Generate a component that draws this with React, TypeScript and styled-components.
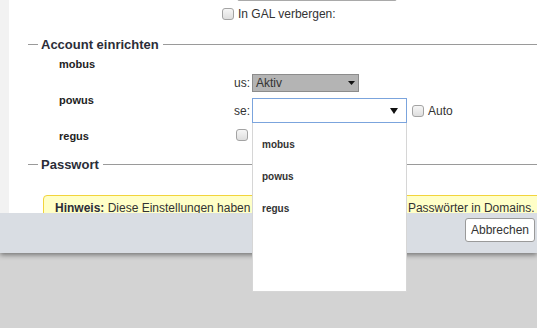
import React from 'react';
import styled, { createGlobalStyle } from 'styled-components';

const Global = createGlobalStyle`
  html, body { margin: 0; padding: 0; }
  body {
    font-family: "Liberation Sans", Arial, sans-serif;
    color: #333;
    background: #d3d3d3;
  }
`;

const Page = styled.div`
  position: relative;
  width: 537px;
  height: 328px;
  overflow: hidden;
  background: #d3d3d3;
`;

const Dialog = styled.div`
  display: flex;
  flex-direction: column;
  box-shadow: 0 2px 5px rgba(0, 0, 0, 0.45);
`;

const Body = styled.div`
  display: flex;
  height: 213px;
`;

const Strip = styled.div`
  width: 9px;
  flex-shrink: 0;
  background: #f2f2f2;
`;

const Main = styled.div`
  flex: 1;
  min-width: 0;
  background: #fff;
  overflow: hidden;
  display: flex;
  flex-direction: column;
`;

const TopInput = styled.div`
  flex-shrink: 0;
  box-sizing: border-box;
  width: 160px;
  height: 22px;
  margin: -21px 0 0 228px;
  border: 1px solid #a9a9a9;
  border-radius: 2px;
`;

const CheckRow = styled.label<{ $indent?: number; $top?: number }>`
  display: flex;
  align-items: center;
  gap: 4px;
  height: 13px;
  margin: ${(p) => p.$top ?? 0}px 0 0 ${(p) => p.$indent ?? 0}px;
  font-size: 12px;
  color: #333;
  white-space: nowrap;
`;

const Check = styled.input.attrs({ type: 'checkbox' })`
  appearance: none;
  -webkit-appearance: none;
  margin: 0;
  box-sizing: border-box;
  width: 12px;
  height: 12px;
  flex-shrink: 0;
  border: 1px solid #a3a3a3;
  border-radius: 3px;
  background: linear-gradient(#f6f6f6, #dedede);
`;

const Legend = styled.div<{ $top: number }>`
  display: flex;
  align-items: center;
  height: 15px;
  margin: ${(p) => p.$top}px 0 0 19px;
  font-size: 13px;
  font-weight: 700;
  color: #2b2d38;
  white-space: nowrap;
  &::before {
    content: '';
    width: 10px;
    height: 1px;
    margin-right: 3px;
    background: #9a9a9a;
  }
  &::after {
    content: '';
    flex: 1;
    height: 1px;
    margin-left: 4px;
    background: #9a9a9a;
  }
`;

const FormGrid = styled.div`
  display: grid;
  grid-template-columns: 163px 1fr;
  padding-left: 50px;
`;

const LabelCol = styled.div`
  display: flex;
  flex-direction: column;
  gap: 22px;
  padding-top: 5px;
`;

const FieldLabel = styled.div`
  font-size: 11px;
  font-weight: 700;
  line-height: 14px;
  color: #222;
`;

const ControlCol = styled.div`
  display: flex;
  flex-direction: column;
  padding-top: 22px;
`;

const ControlRow = styled.div<{ $top?: number }>`
  display: flex;
  align-items: center;
  margin-top: ${(p) => p.$top ?? 0}px;
`;

const Prefix = styled.span`
  width: 28px;
  margin-right: 2px;
  text-align: right;
  font-size: 12px;
  color: #333;
`;

const Select = styled.div<{ $focused?: boolean; $width: number; $height: number }>`
  box-sizing: border-box;
  display: flex;
  align-items: center;
  justify-content: space-between;
  width: ${(p) => p.$width}px;
  height: ${(p) => p.$height}px;
  padding: 0 ${(p) => (p.$focused ? 8 : 3)}px 0 3px;
  border: 1px solid ${(p) => (p.$focused ? '#7ba4dd' : '#8c8c8c')};
  background: ${(p) => (p.$focused ? '#fff' : '#b4b4b4')};
  font-size: 12px;
  color: #333;
`;

const AutoCheck = styled(CheckRow)`
  margin-left: 5px;
`;

const Hint = styled.div`
  align-self: flex-start;
  margin: 23px 0 0 34px;
  padding: 5px 11px;
  border: 1px solid #f2d43c;
  border-radius: 4px;
  background: #ffffc7;
  font-size: 12px;
  line-height: 14px;
  color: #333;
  white-space: nowrap;
  b { color: #2b2d38; }
`;

const Gap = styled.span`
  display: inline-block;
  width: 2px;
`;

const Footer = styled.div`
  box-sizing: border-box;
  height: 40px;
  display: flex;
  justify-content: flex-end;
  align-items: flex-start;
  padding: 5px 2px 0 0;
  background: #d9dde3;
`;

const Button = styled.button`
  height: 24px;
  padding: 0 5px;
  border: 1px solid #9a9a9a;
  border-radius: 3px;
  background: #fff;
  font-family: "Liberation Sans", Arial, sans-serif;
  font-size: 12px;
  color: #333;
`;

const Popup = styled.ul`
  position: absolute;
  left: 252px;
  top: 123px;
  box-sizing: border-box;
  width: 155px;
  height: 169px;
  margin: 0;
  padding: 6px 0 0;
  list-style: none;
  background: #fff;
  border: 1px solid #d6d6d6;
  border-top: none;
`;

const Option = styled.li`
  height: 32px;
  line-height: 32px;
  padding-left: 9px;
  font-size: 10px;
  font-weight: 700;
  color: #333;
`;

const Arrow = ({ w, h }: { w: number; h: number }) => (
  <svg width={w} height={h} viewBox={`0 0 ${w} ${h}`} aria-hidden>
    <polygon points={`0,0 ${w},0 ${w / 2},${h}`} fill="#111" />
  </svg>
);

export default function App() {
  return (
    <Page>
      <Global />
      <Dialog>
        <Body>
          <Strip />
          <Main>
            <TopInput />
            <CheckRow $indent={213} $top={6}>
              <Check />
              In GAL verbergen:
            </CheckRow>
            <Legend $top={17}>Account einrichten</Legend>
            <FormGrid>
              <LabelCol>
                <FieldLabel>mobus</FieldLabel>
                <FieldLabel>powus</FieldLabel>
                <FieldLabel>regus</FieldLabel>
              </LabelCol>
              <ControlCol>
                <ControlRow>
                  <Prefix>us:</Prefix>
                  <Select $width={107} $height={18}>
                    Aktiv
                    <Arrow w={7} h={4} />
                  </Select>
                </ControlRow>
                <ControlRow $top={6}>
                  <Prefix>se:</Prefix>
                  <Select $focused $width={155} $height={25}>
                    <span />
                    <Arrow w={8} h={6} />
                  </Select>
                  <AutoCheck>
                    <Check />
                    Auto
                  </AutoCheck>
                </ControlRow>
                <CheckRow $indent={14} $top={5}>
                  <Check />
                </CheckRow>
              </ControlCol>
            </FormGrid>
            <Legend $top={14}>Passwort</Legend>
            <Hint>
              <b>Hinweis:</b> Diese Einstellungen haben keine Auswirkungen auf alle <Gap />Passwörter in Domains.
            </Hint>
          </Main>
        </Body>
        <Footer>
          <Button>Abbrechen</Button>
        </Footer>
      </Dialog>
      <Popup>
        <Option>mobus</Option>
        <Option>powus</Option>
        <Option>regus</Option>
      </Popup>
    </Page>
  );
}
